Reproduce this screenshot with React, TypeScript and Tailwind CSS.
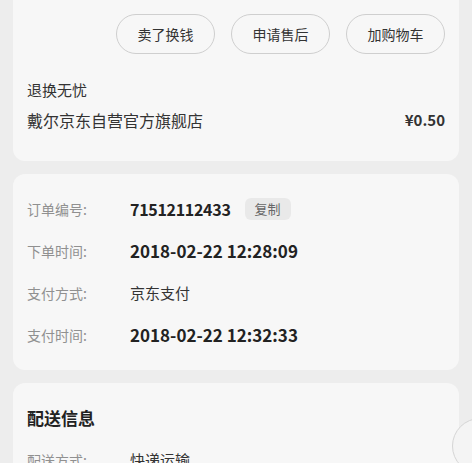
import React from 'react';

const font = { fontFamily: '"Noto Sans CJK SC", "Noto Sans", sans-serif' };

function ActionButton({ label }: { label: string }) {
  return (
    <button className="h-[40px] w-[99px] rounded-full border border-[#cfcfcf] text-[14px] text-[#333]">
      {label}
    </button>
  );
}

function InfoRow({ label, value, kind, extra }: { label: string; value: string; kind: 'num' | 'date' | 'text'; extra?: React.ReactNode }) {
  const cls =
    kind === 'num'
      ? 'text-[16px] font-semibold tracking-[-0.3px] text-[#222]'
      : kind === 'date'
        ? 'text-[17px] font-semibold text-[#222]'
        : 'text-[15px] text-[#333]';
  return (
    <div className="flex h-[42px] items-center">
      <span className="w-[103px] text-[14px] text-[#909090]">{label}</span>
      <span className={cls}>{value}</span>
      {extra}
    </div>
  );
}

export default function App() {
  const orderRows: { label: string; value: string; kind: 'date' | 'text' }[] = [
    { label: '下单时间:', value: '2018-02-22 12:28:09', kind: 'date' },
    { label: '支付方式:', value: '京东支付', kind: 'text' },
    { label: '支付时间:', value: '2018-02-22 12:32:33', kind: 'date' },
  ];

  return (
    <div className="relative h-[463px] w-[472px] overflow-hidden bg-[#ededed]" style={font}>
      <div className="flex flex-col gap-[13px] px-[13px]">
        {/* goods card */}
        <div className="rounded-b-[12px] bg-[#f7f7f7] px-[14px] pt-[14px] pb-[29px]">
          <div className="flex justify-end gap-[16px]">
            <ActionButton label="卖了换钱" />
            <ActionButton label="申请售后" />
            <ActionButton label="加购物车" />
          </div>
          <div className="mt-[24px] text-[15px] leading-[24px] text-[#333]">退换无忧</div>
          <div className="mt-[6px] flex items-center justify-between leading-[24px]">
            <span className="text-[16px] text-[#333]">戴尔京东自营官方旗舰店</span>
            <span className="text-[15px] font-bold text-[#333]">¥0.50</span>
          </div>
        </div>

        {/* order card */}
        <div className="rounded-[12px] bg-[#f7f7f7] px-[14px] py-[14px]">
          <InfoRow
            label="订单编号:"
            value="71512112433"
            kind="num"
            extra={
              <span className="ml-[14px] rounded-[6px] bg-[#e9e9e9] px-[10px] py-[1px] text-[13px] text-[#666]">复制</span>
            }
          />
          {orderRows.map((r) => (
            <InfoRow key={r.label} label={r.label} value={r.value} kind={r.kind} />
          ))}
        </div>

        {/* delivery card */}
        <div className="rounded-[12px] bg-[#f7f7f7] px-[14px] pt-[22px] pb-[20px]">
          <div className="text-[17px] font-bold leading-[26px] text-[#222]">配送信息</div>
          <div className="mt-[14px] flex h-[30px] items-center">
            <span className="w-[103px] text-[14px] text-[#909090]">配送方式:</span>
            <span className="text-[15px] text-[#333]">快递运输</span>
          </div>
        </div>
      </div>

      <div className="absolute left-[452px] top-[418px] h-[56px] w-[56px] rounded-full border border-[#d5d5d5] bg-[#f4f4f4]" />
    </div>
  );
}
